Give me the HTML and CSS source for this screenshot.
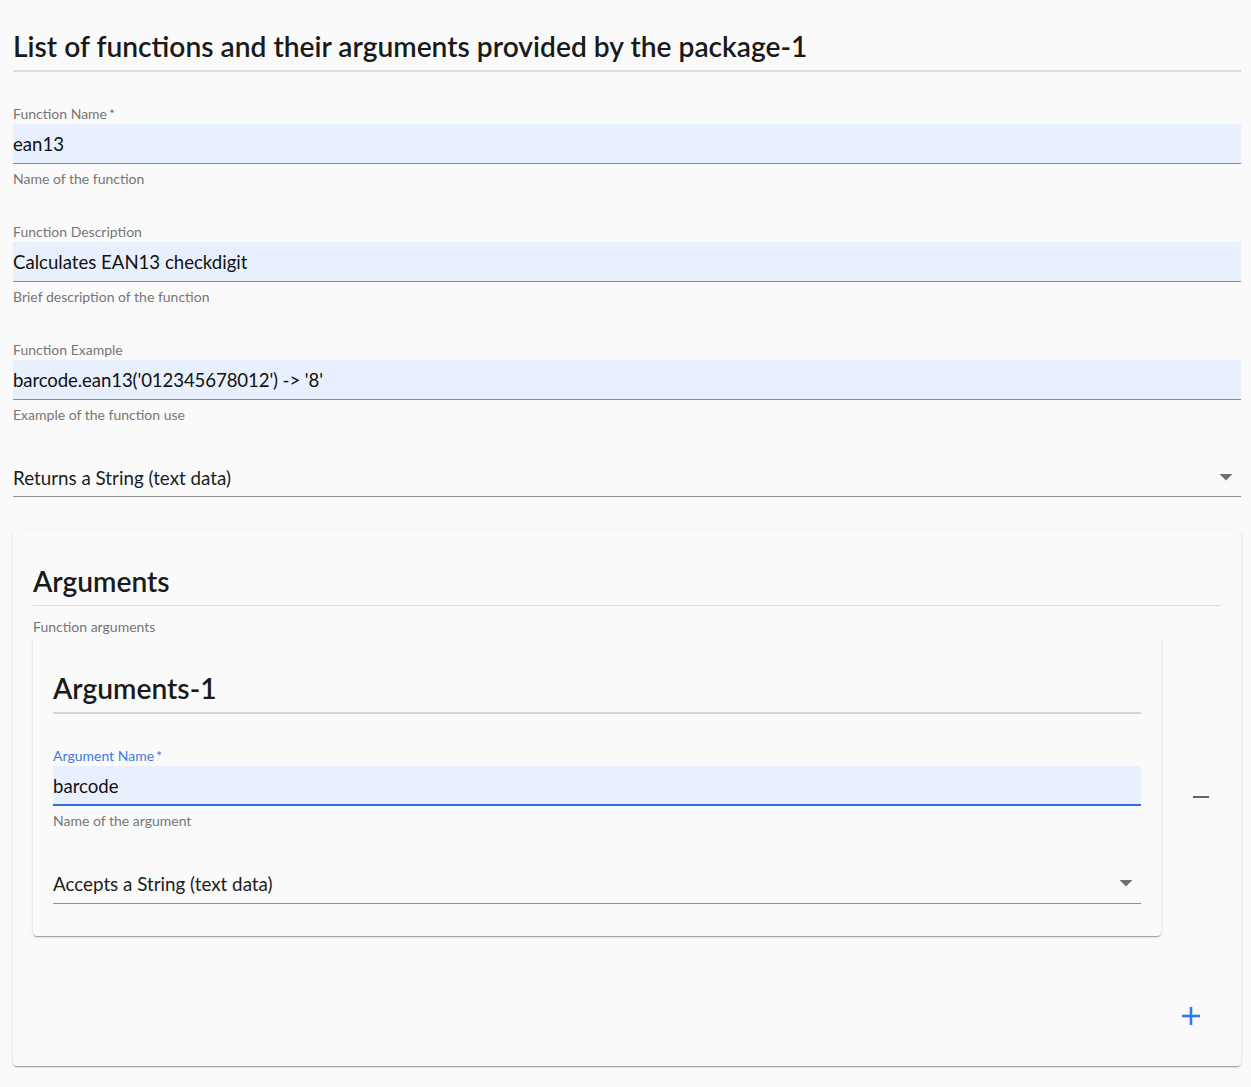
FILE: index.html
```html
<!DOCTYPE html>
<html lang="en">
<head>
<meta charset="utf-8">
<title>Functions</title>
<link rel="stylesheet" href="styles.css">
</head>
<body>
<div class="page">
  <h1 class="title">List of functions and their arguments provided by the package-1</h1>

  <div class="field">
    <div class="label">Function Name<span class="req">*</span></div>
    <div class="input">ean13</div>
    <div class="helper">Name of the function</div>
  </div>

  <div class="field">
    <div class="label">Function Description</div>
    <div class="input">Calculates EAN13 checkdigit</div>
    <div class="helper">Brief description of the function</div>
  </div>

  <div class="field">
    <div class="label">Function Example</div>
    <div class="input code">barcode.ean13('012345678012') -&gt; '8'</div>
    <div class="helper">Example of the function use</div>
  </div>

  <div class="select">
    <span class="select-text">Returns a String (text data)</span>
    <svg class="caret" width="14" height="7" viewBox="0 0 14 7"><path d="M0.5 0 L13.5 0 L7 6.5 Z" fill="#707070"/></svg>
  </div>

  <div class="card outer">
    <h2 class="card-title">Arguments</h2>
    <div class="helper sub">Function arguments</div>
    <div class="arg-row">
      <div class="card inner">
        <h2 class="card-title thick">Arguments-1</h2>
        <div class="field first">
          <div class="label focused">Argument Name<span class="req">*</span></div>
          <div class="input focused">barcode</div>
          <div class="helper">Name of the argument</div>
        </div>
        <div class="select">
          <span class="select-text">Accepts a String (text data)</span>
          <svg class="caret" width="14" height="7" viewBox="0 0 14 7"><path d="M0.5 0 L13.5 0 L7 6.5 Z" fill="#707070"/></svg>
        </div>
      </div>
      <div class="side">
        <button class="icon-btn minus" type="button" aria-label="Remove argument">
          <svg width="16" height="2" viewBox="0 0 16 2"><rect x="0" y="0" width="16" height="2" fill="#5f6473"/></svg>
        </button>
      </div>
    </div>
    <div class="add-row">
      <button class="icon-btn plus" type="button" aria-label="Add argument">
        <svg width="18" height="18" viewBox="0 0 18 18"><rect x="0" y="7.7" width="18" height="2.6" fill="#2f7be6"/><rect x="7.7" y="0" width="2.6" height="18" fill="#2f7be6"/></svg>
      </button>
    </div>
  </div>
</div>
</body>
</html>
```
FILE: styles.css
```css
* { box-sizing: border-box; }
html, body { margin: 0; padding: 0; background: #fafafa; }
body {
  font-family: "Lato", "Liberation Sans", sans-serif;
  color: #212121;
}
.page {
  padding: 28px 10px 21px 13px;
  display: flex;
  flex-direction: column;
}
.title, .card-title {
  margin: 0;
  font-size: 28.2px;
  font-weight: 600;
  line-height: 36px;
  color: #1a1a1a;
  padding-bottom: 6px;
  border-bottom: 2px solid #dcdcdc;
}
.field {
  margin-top: 35px;
  display: flex;
  flex-direction: column;
}
.title + .field { margin-top: 33px; }
.label {
  font-size: 14px;
  line-height: 18px;
  color: #767676;
  margin-bottom: 1px;
}
.label .req { margin-left: 2px; }
.label.focused { color: #3d7be0; }
.input {
  height: 40px;
  background: #e8f0fe;
  border-bottom: 1px solid #8a8d92;
  font-size: 18.6px;
  line-height: 37px;
  padding-top: 2px;
  color: #111;
  white-space: nowrap;
}
.input.code { letter-spacing: -0.1px; }
.input.focused {
  border-bottom: 2px solid #2f73e0;
  line-height: 36px;
}
.helper {
  margin-top: 6px;
  font-size: 14px;
  line-height: 18px;
  color: #767676;
}
.select {
  margin-top: 33px;
  height: 40px;
  border-bottom: 1px solid #8f8f8f;
  display: flex;
  align-items: center;
  justify-content: space-between;
  padding-right: 8px;
  padding-top: 1px;
}
.select-text {
  font-size: 18.8px;
  color: #1c1c1c;
}
.caret { display: block; margin-top: 0; }

.card {
  background: #fafafa;
  border-radius: 4px;
  box-shadow: 0 2px 1px -1px rgba(0,0,0,0.2), 0 1px 1px 0 rgba(0,0,0,0.14), 0 1px 3px 0 rgba(0,0,0,0.12);
}
.outer {
  margin-top: 33px;
  padding: 33px 20px 30px 20px;
  display: flex;
  flex-direction: column;
}
.outer > .card-title {
  padding-bottom: 6px;
  border-bottom: 1px solid #dcdcdc;
}
.helper.sub { margin-top: 12px; }
.arg-row {
  margin-top: 1px;
  display: flex;
  align-items: stretch;
}
.inner {
  flex: 1;
  padding: 33px 20px 32px 20px;
  display: flex;
  flex-direction: column;
}
.inner > .card-title.thick {
  padding-bottom: 6px;
  border-bottom: 2px solid #d6d6d6;
}
.field.first { margin-top: 33px; }
.inner .select { margin-top: 33px; height: 41px; }
.side {
  width: 60px;
  display: flex;
  align-items: center;
  justify-content: flex-end;
}
.icon-btn {
  width: 40px;
  height: 40px;
  border: 0;
  padding: 0;
  background: transparent;
  display: flex;
  align-items: center;
  justify-content: center;
  border-radius: 50%;
  cursor: pointer;
}
.minus { margin-top: 20px; }
.add-row {
  margin-top: 60px;
  display: flex;
  justify-content: flex-end;
  padding-right: 10px;
}
```
